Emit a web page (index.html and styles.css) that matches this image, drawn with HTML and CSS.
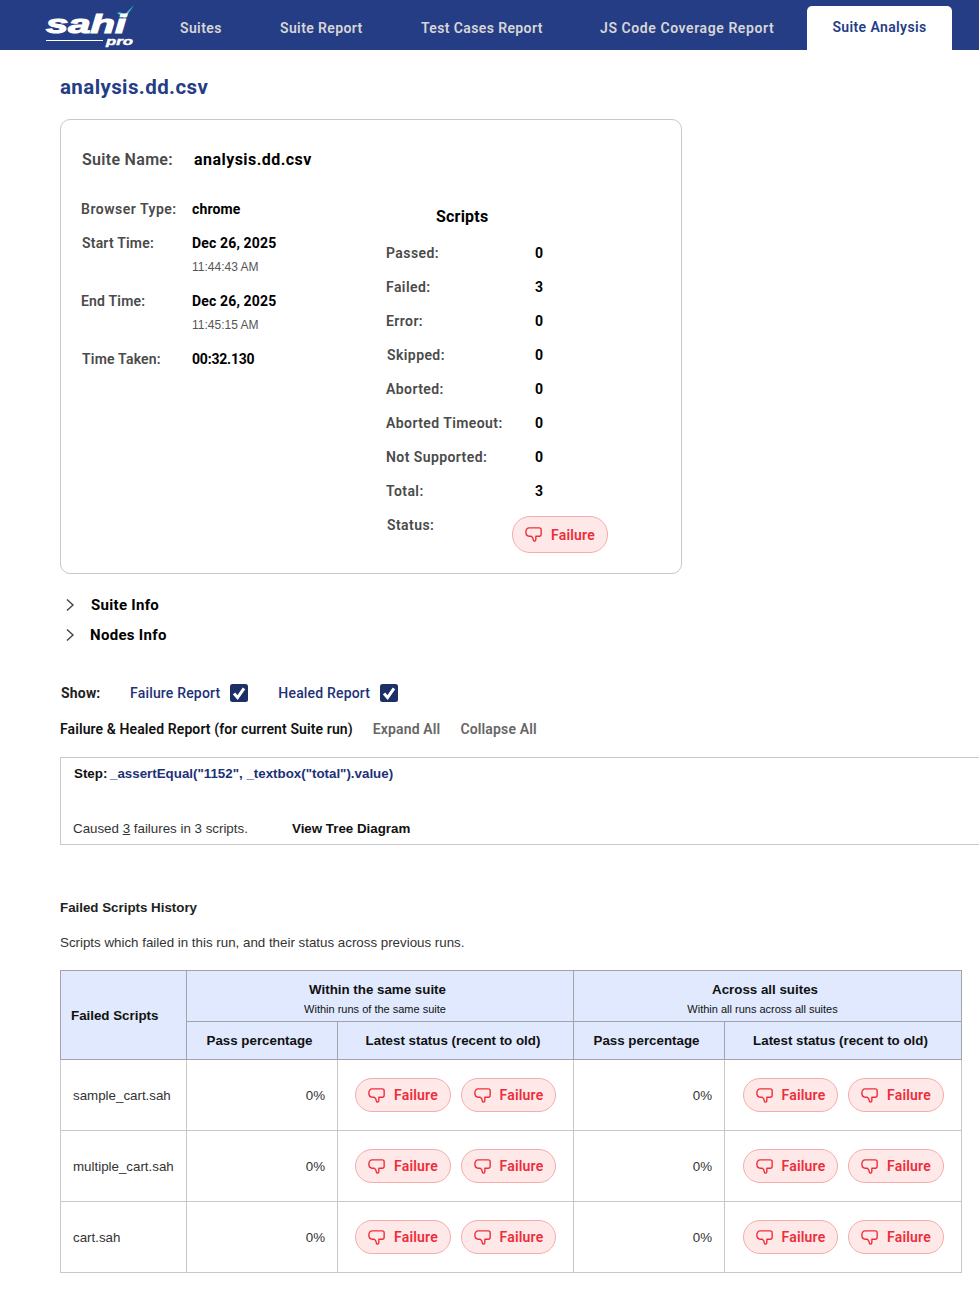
FILE: index.html
```html
<!DOCTYPE html>
<html lang="en">
<head>
<meta charset="utf-8">
<title>Suite Analysis</title>
<link rel="stylesheet" href="styles.css">
</head>
<body>
<svg class="defs" width="0" height="0" aria-hidden="true"><defs>
<symbol id="down" viewBox="0 0 16 14"><path d="M4 .8h9.400c1 0 1.800.8 1.800 1.800v4.200c0 1-.8 1.800-1.800 1.800H10.200V11.800c0 .8-.5 1.400-1.200 1.400-.6 0-1-.4-1.100-1L7.200 9.900 5.800 8.600H4C2 8.600 .8 7 .8 4.700S2 .8 4 .8z" fill="none" stroke="currentColor" stroke-width="1.300" stroke-linejoin="round" stroke-linecap="round"/></symbol>
<symbol id="chev" viewBox="0 0 10 14"><path d="M2 1.500 8 7l-6 5.500" fill="none" stroke="currentColor" stroke-width="1.400"/></symbol>
<symbol id="check" viewBox="0 0 18 18"><rect width="18" height="18" rx="2.500" fill="#1c2f66"/><path d="M4 9.500 7.600 13.600 14 4.400" fill="none" stroke="#fff" stroke-width="3"/></symbol>
</defs></svg>
<nav class="nav">
  <div class="logo">
    <svg width="90" height="50" viewBox="0 0 90 50">
      <path d="M72 13 75 12 79 15 89 5 80 18.500z" fill="#3cc9bd"/>
      <path d="M1 40.500h57" stroke="#fff" stroke-width="1" fill="none"/>
      <text class="logo-main" x="1" y="33" textLength="80" lengthAdjust="spacingAndGlyphs">sahi</text>
      <text class="logo-pro" x="61" y="45" textLength="27" lengthAdjust="spacingAndGlyphs">pro</text>
    </svg>
  </div>
  <a class="tab t1">Suites</a>
  <a class="tab t2">Suite Report</a>
  <a class="tab t3">Test Cases Report</a>
  <a class="tab t4">JS Code Coverage Report</a>
  <a class="tab active">Suite Analysis</a>
</nav>
<main class="main">
  <h1 class="title">analysis.dd.csv</h1>
  <section class="card">
    <div class="suite-name"><span class="sn-label">Suite Name:</span><span class="sn-value">analysis.dd.csv</span></div>
    <div class="columns">
      <div class="left">
        <div class="lrow browser"><span class="label">Browser Type:</span><b>chrome</b></div>
        <div class="lrow start"><span class="label">Start Time:</span><div class="when"><b>Dec 26, 2025</b><small>11:44:43 AM</small></div></div>
        <div class="lrow end"><span class="label">End Time:</span><div class="when"><b>Dec 26, 2025</b><small>11:45:15 AM</small></div></div>
        <div class="lrow taken"><span class="label">Time Taken:</span><b>00:32.130</b></div>
      </div>
      <div class="right">
        <h2 class="scripts">Scripts</h2>
        <div class="srow"><span class="label">Passed:</span><b>0</b></div>
        <div class="srow"><span class="label">Failed:</span><b>3</b></div>
        <div class="srow"><span class="label">Error:</span><b>0</b></div>
        <div class="srow skip"><span class="label">Skipped:</span><b>0</b></div>
        <div class="srow"><span class="label">Aborted:</span><b>0</b></div>
        <div class="srow"><span class="label">Aborted Timeout:</span><b>0</b></div>
        <div class="srow"><span class="label">Not Supported:</span><b>0</b></div>
        <div class="srow"><span class="label">Total:</span><b>3</b></div>
        <div class="srow status"><span class="label">Status:</span><span class="pill big"><svg class="ico"><use href="#down"/></svg>Failure</span></div>
      </div>
    </div>
  </section>
  <div class="acc"><svg class="chev"><use href="#chev"/></svg><span>Suite Info</span></div>
  <div class="acc nodes"><svg class="chev"><use href="#chev"/></svg><span>Nodes Info</span></div>
  <div class="show">
    <b class="show-l">Show:</b>
    <span class="opt">Failure Report</span><svg class="cb"><use href="#check"/></svg>
    <span class="opt opt2">Healed Report</span><svg class="cb"><use href="#check"/></svg>
  </div>
  <div class="report-head"><b>Failure &amp; Healed Report (for current Suite run)</b><a>Expand All</a><a>Collapse All</a></div>
  <div class="step">
    <div class="step-line"><b>Step:</b> <b class="expr">_assertEqual("1152", _textbox("total").value)</b></div>
    <div class="step-foot"><span>Caused <u>3</u> failures in 3 scripts.</span><b>View Tree Diagram</b></div>
  </div>
  <h3 class="hist">Failed Scripts History</h3>
  <p class="hist-sub">Scripts which failed in this run, and their status across previous runs.</p>
  <table class="tbl">
    <colgroup><col class="c1"><col class="c2"><col class="c3"><col class="c4"><col class="c5"></colgroup>
    <thead>
      <tr class="h1"><th rowspan="2" class="fs">Failed Scripts</th><th colspan="2"><div class="gh">Within the same suite</div><div class="gs">Within runs of the same suite</div></th><th colspan="2"><div class="gh">Across all suites</div><div class="gs">Within all runs across all suites</div></th></tr>
      <tr class="h2"><th>Pass percentage</th><th>Latest status (recent to old)</th><th>Pass percentage</th><th>Latest status (recent to old)</th></tr>
    </thead>
    <tbody>
      <tr><td class="nm">sample_cart.sah</td><td class="pc">0%</td><td class="st"><div class="pills"><span class="pill"><svg class="ico"><use href="#down"/></svg>Failure</span><span class="pill"><svg class="ico"><use href="#down"/></svg>Failure</span></div></td><td class="pc">0%</td><td class="st"><div class="pills"><span class="pill"><svg class="ico"><use href="#down"/></svg>Failure</span><span class="pill"><svg class="ico"><use href="#down"/></svg>Failure</span></div></td></tr>
      <tr><td class="nm">multiple_cart.sah</td><td class="pc">0%</td><td class="st"><div class="pills"><span class="pill"><svg class="ico"><use href="#down"/></svg>Failure</span><span class="pill"><svg class="ico"><use href="#down"/></svg>Failure</span></div></td><td class="pc">0%</td><td class="st"><div class="pills"><span class="pill"><svg class="ico"><use href="#down"/></svg>Failure</span><span class="pill"><svg class="ico"><use href="#down"/></svg>Failure</span></div></td></tr>
      <tr><td class="nm">cart.sah</td><td class="pc">0%</td><td class="st"><div class="pills"><span class="pill"><svg class="ico"><use href="#down"/></svg>Failure</span><span class="pill"><svg class="ico"><use href="#down"/></svg>Failure</span></div></td><td class="pc">0%</td><td class="st"><div class="pills"><span class="pill"><svg class="ico"><use href="#down"/></svg>Failure</span><span class="pill"><svg class="ico"><use href="#down"/></svg>Failure</span></div></td></tr>
    </tbody>
  </table>
</main>
</body>
</html>
```
FILE: styles.css
```css
* { box-sizing: border-box; }
html, body { margin: 0; padding: 0; background: #fff; }
html { overflow: hidden; }
body { font-family: Roboto, "Liberation Sans", sans-serif; color: #000; width: 979px; height: 1313px; overflow: hidden; }
.defs { position: absolute; }
.nav { height: 50px; background: #253d85; display: flex; align-items: flex-end; }
.logo { width: 180px; height: 50px; padding-left: 45px; flex: none; }
.logo svg { display: block; }
.logo-main { font: italic 700 26px "Liberation Sans", sans-serif; fill: #fff; stroke: #fff; stroke-width: 1.100px; }
.logo-pro { font: italic 700 11px "Liberation Sans", sans-serif; fill: #fff; stroke: #fff; stroke-width: .4px; }
.tab { font-size: 14px; font-weight: 600; letter-spacing: .38px; color: #d6d6d6; height: 44px; line-height: 44px; white-space: nowrap; }
.t1 { width: 100px; }
.t2 { width: 141px; }
.t3 { width: 179px; }
.t4 { width: 207px; letter-spacing: .58px; }
.active { width: 145px; background: #fff; color: #253d85; text-align: center; border-radius: 5px 5px 0 0; line-height: 43px; }
.main { padding: 0 0 0 60px; }
.title { margin: 0; padding-top: 25px; height: 69px; font-size: 20.500px; font-weight: 700; letter-spacing: .4px; line-height: 25px; color: #253d85; }
.card { width: 622px; height: 455px; border: 1px solid #c8c8c8; border-radius: 10px; padding: 30px 0 0 21px; }
.suite-name { display: flex; height: 20px; line-height: 20px; font-size: 16px; letter-spacing: .3px; }
.sn-label { width: 112px; font-weight: 600; color: #4a4a4a; }
.sn-value { font-weight: 700; color: #000; letter-spacing: .45px; }
.columns { display: flex; margin-top: 31px; }
.left { width: 304px; }
.lrow { display: flex; font-size: 14px; letter-spacing: .15px; }
.label { color: #4a4a4a; font-weight: 600; font-size: 14px; letter-spacing: .42px; white-space: nowrap; }
.lrow .label { width: 110px; flex: none; letter-spacing: .2px; }
.lrow.browser .label { letter-spacing: .5px; }
.lrow b { display: block; font-weight: 700; line-height: 18px; color: #000; margin-top: -1px; }
.taken b { letter-spacing: -.2px; }
.lrow small { display: block; font-family: "Liberation Sans", Arial, sans-serif; font-size: 12px; letter-spacing: 0; color: #555; line-height: 16px; margin-top: 7px; }
.browser { height: 34px; margin-left: -1px; }
.lrow.browser .label { width: 111px; }
.start { height: 58px; }
.end { height: 58px; margin-left: -1px; }
.lrow.end .label { width: 111px; }
.taken { height: 20px; }
.right { padding-top: 6px; }
.scripts { margin: 0 0 0 50px; height: 37px; font-size: 16px; font-weight: 700; letter-spacing: .2px; line-height: 20px; color: #000; }
.srow { display: flex; height: 34px; line-height: 18px; }
.srow .label { width: 149px; }
.srow b { font-size: 14px; font-weight: 700; }
.skip { margin-left: 1px; }
.srow.skip .label { width: 148px; }
.status { align-items: flex-start; margin-left: 1px; }
.srow.status .label { width: 125px; }
.pill { display: inline-flex; align-items: center; height: 34px; padding: 0 12px; width: 95.500px; border: 1px solid #f3adad; border-radius: 17px; background: #ffe8e8; color: #ed2e3a; font-family: Roboto, sans-serif; font-size: 14px; font-weight: 600; letter-spacing: .2px; white-space: nowrap; }
.big { height: 37px; border-radius: 18px; }
.ico { width: 17px; height: 15px; margin-right: 9px; flex: none; }
.acc { display: flex; align-items: center; height: 30px; margin-top: 16px; font-size: 15px; font-weight: 700; letter-spacing: .3px; }
.acc span { margin-left: 16px; }
.nodes { margin-top: 0; }
.nodes span { margin-left: 15px; }
.chev { width: 10px; height: 14px; margin-left: 5px; color: #444; }
.show { display: flex; align-items: center; height: 18px; margin-top: 34px; font-size: 14px; letter-spacing: .18px; margin-left: 1px; }
.show-l { font-weight: 700; color: #222; width: 69px; }
.opt { color: #1d3178; font-weight: 500; }
.opt2 { margin-left: 30px; }
.cb { width: 18px; height: 18px; margin-left: 10px; }
.report-head { display: flex; margin-top: 18px; height: 18px; line-height: 18px; font-size: 14px; letter-spacing: .1px; }
.report-head b { font-weight: 600; color: #111; margin-right: 20px; }
.report-head a { font-weight: 600; color: #666; margin-right: 20px; letter-spacing: .15px; }
.step { width: 1000px; height: 88px; margin-top: 19px; border: 1px solid #c8c8c8; border-right: 0; font-family: "Liberation Sans", Arial, sans-serif; font-size: 13.330px; padding: 8px 13px 0 12px; }
.step-line { line-height: 16px; margin-left: 1px; color: #111; }
.expr { color: #1d3178; margin-left: -1px; }
.step-foot { display: flex; margin-top: 39px; line-height: 16px; color: #333; }
.step-foot span { width: 219px; }
.step-foot b { color: #111; }
.hist { margin: 54px 0 0; height: 18px; line-height: 18px; font-family: "Liberation Sans", Arial, sans-serif; font-size: 13.330px; font-weight: 700; color: #222; }
.hist-sub { margin: 17px 0 0; height: 18px; line-height: 18px; font-family: "Liberation Sans", Arial, sans-serif; font-size: 13.330px; color: #333; }
.tbl { margin-top: 18px; width: 902px; table-layout: fixed; border-collapse: collapse; font-family: "Liberation Sans", Arial, sans-serif; font-size: 13.330px; }
.c1 { width: 126px; }
.c2 { width: 151px; }
.c3 { width: 236px; }
.c4 { width: 151px; }
.c5 { width: 237px; }
th { background: #e0e9fd; border: 1px solid #a3a3ab; color: #111; font-weight: 700; padding: 0 5px 0 0; }
.h1 th { height: 51px; padding-top: 5px; }
.h2 th { height: 38px; }
.h1 .fs { text-align: left; padding: 0 0 0 10px; }
.gh { line-height: 18px; }
.gs { font-size: 11px; font-weight: 400; line-height: 16px; margin-top: 2px; padding-right: 5px; }
td { border: 1px solid #c8c8c8; height: 71px; padding: 0; color: #333; }
.nm { padding-left: 12px; }
.pc { text-align: right; padding-right: 12px; }
.pills { display: flex; gap: 10px; justify-content: center; }
```
